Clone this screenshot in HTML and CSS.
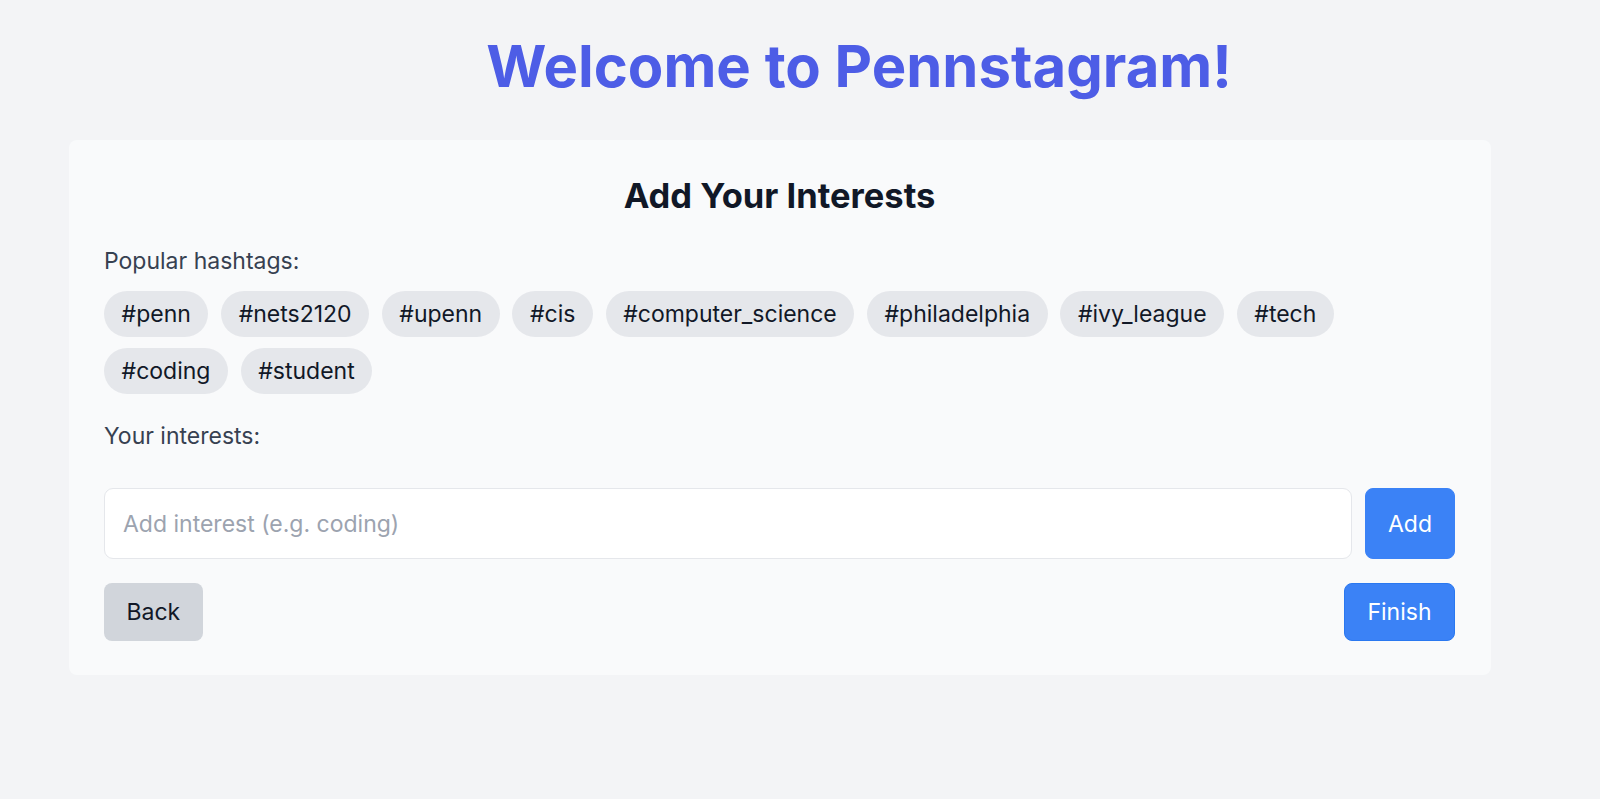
FILE: index.html
```html
<!DOCTYPE html>
<html lang="en">
<head>
<meta charset="utf-8">
<title>Pennstagram</title>
<link rel="stylesheet" href="styles.css">
</head>
<body>
<header class="page-header">
  <h1 class="brand-title">Welcome to Pennstagram!</h1>
</header>
<main class="card">
  <h2 class="card-title">Add Your Interests</h2>
  <p class="label label-popular">Popular hashtags:</p>
  <div class="tag-list">
    <button class="tag">#penn</button>
    <button class="tag">#nets2120</button>
    <button class="tag">#upenn</button>
    <button class="tag">#cis</button>
    <button class="tag">#computer_science</button>
    <button class="tag">#philadelphia</button>
    <button class="tag">#ivy_league</button>
    <button class="tag">#tech</button>
    <button class="tag">#coding</button>
    <button class="tag">#student</button>
  </div>
  <p class="label label-yours">Your interests:</p>
  <div class="add-row">
    <input class="interest-input" type="text" placeholder="Add interest (e.g. coding)">
    <button class="btn btn-primary btn-add">Add</button>
  </div>
  <div class="nav-row">
    <button class="btn btn-secondary">Back</button>
    <button class="btn btn-primary btn-finish">Finish</button>
  </div>
</main>
</body>
</html>
```

FILE: styles.css
```css
* { box-sizing: border-box; }

html, body {
  margin: 0;
  padding: 0;
}

body {
  background: #f3f4f6;
  font-family: "Inter", "Noto Sans", "Liberation Sans", sans-serif;
  color: #111827;
  min-height: 799px;
}

.page-header {
  padding: 31px 0 0 118px;
  text-align: center;
}

.brand-title {
  margin: 0;
  font-size: 58px;
  line-height: 70px;
  font-weight: 700;
  color: #4d5de6;
}

.card {
  margin: 39px 0 0 69px;
  width: 1422px;
  background: #f9fafb;
  border-radius: 8px;
  padding: 35px 36px 34px 35px;
}

.card-title {
  margin: 0;
  text-align: center;
  font-size: 34.5px;
  line-height: 41px;
  font-weight: 700;
  color: #111827;
}

.label {
  margin: 0;
  font-size: 23px;
  line-height: 30px;
  color: #374151;
}

.label-popular { margin-top: 30px; }
.label-yours { margin-top: 27px; }

.tag-list {
  margin-top: 15px;
  display: flex;
  flex-wrap: wrap;
  column-gap: 12.6px;
  row-gap: 11px;
}

.tag {
  height: 46px;
  padding: 0 17.6px;
  border: none;
  border-radius: 23px;
  background: #e5e7eb;
  color: #111827;
  font-family: inherit;
  font-size: 23px;
  line-height: 28px;
}

.add-row {
  margin-top: 37px;
  display: flex;
  gap: 13px;
  height: 71px;
}

.interest-input {
  flex: 1;
  min-width: 0;
  height: 100%;
  border: 1px solid #e5e7eb;
  border-radius: 9px;
  background: #ffffff;
  padding: 0 18px;
  font-family: inherit;
  font-size: 23px;
  color: #111827;
  outline: none;
}

.interest-input::placeholder { color: #9ca3af; }

.nav-row {
  margin-top: 24px;
  display: flex;
  justify-content: space-between;
}

.btn {
  height: 58px;
  padding: 0 22.5px;
  border: none;
  border-radius: 8px;
  font-family: inherit;
  font-size: 23px;
  line-height: 28px;
}

.btn-primary {
  background: #3b82f6;
  color: #ffffff;
  border: 1px solid #3b82f6;
}

.btn-add {
  height: 100%;
  width: 90px;
  padding: 0;
}

.btn-finish {
  border-color: #2a78f0;
}

.btn-secondary {
  background: #d1d5db;
  color: #111827;
}
```
